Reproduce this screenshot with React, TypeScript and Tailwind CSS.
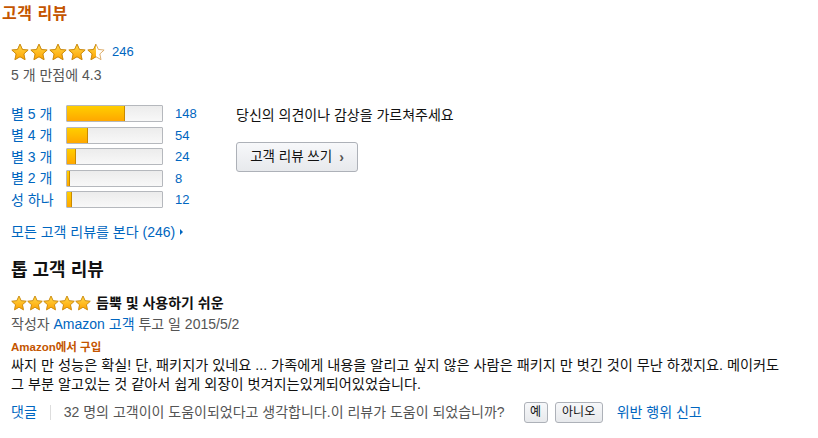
import React from "react";

const font = { fontFamily: '"Liberation Sans", Arial, "Noto Sans CJK KR", sans-serif' };

function Star({ size, fill = 1, id }: { size: number; fill?: number; id: string }) {
  // fill: 1 full, 0.5 half
  return (
    <svg width={size} height={size} viewBox="0 0 24 24">
      <defs>
        <linearGradient id={`g-${id}`} x1="0" y1="0" x2="0" y2="1">
          <stop offset="0" stopColor="#ffd94a" />
          <stop offset="1" stopColor="#ffa200" />
        </linearGradient>
        <clipPath id={`c-${id}`}>
          <rect x="0" y="0" width={24 * fill} height="24" />
        </clipPath>
      </defs>
      <path
        d="M12 1.6l3.2 7 7.6.8-5.7 5.2 1.6 7.6L12 18.3l-6.7 3.9 1.6-7.6L1.2 9.4l7.6-.8z"
        fill="#fff"
        stroke="#d9a45a"
        strokeWidth="1.2"
        strokeLinejoin="round"
      />
      <path
        d="M12 1.6l3.2 7 7.6.8-5.7 5.2 1.6 7.6L12 18.3l-6.7 3.9 1.6-7.6L1.2 9.4l7.6-.8z"
        fill={`url(#g-${id})`}
        stroke="#c98a0b"
        strokeWidth="1.2"
        strokeLinejoin="round"
        clipPath={`url(#c-${id})`}
      />
    </svg>
  );
}

const rows = [
  { label: "별 5 개", count: 148 },
  { label: "별 4 개", count: 54 },
  { label: "별 3 개", count: 24 },
  { label: "별 2 개", count: 8 },
  { label: "성 하나", count: 12 },
];

export default function App() {
  return (
    <div className="bg-white w-[818px] h-[438px] overflow-hidden text-[#111] pl-[2px] pt-[4px]" style={font}>
      <h2 className="text-[16px] leading-[20px] font-bold text-[#c45500] tracking-[0.5px]">고객 리뷰</h2>

      <div className="pl-[9px]">
        {/* rating summary */}
        <div className="flex items-center mt-[19px] h-[18px]">
          <div className="flex gap-[1px]">
            <Star size={18} id="a1" />
            <Star size={18} id="a2" />
            <Star size={18} id="a3" />
            <Star size={18} id="a4" />
            <Star size={18} fill={0.5} id="a5" />
          </div>
          <a className="ml-[7px] text-[13px] text-[#0066c0]">246</a>
        </div>
        <div className="mt-[6px] text-[14px] leading-[16px] text-[#555]">5 개 만점에 4.3</div>

        {/* histogram + write review */}
        <div className="flex mt-[20px]">
          <div className="w-[225px]">
            {rows.map((r) => (
              <div key={r.label} className="flex items-center h-[21.5px]">
                <span className="w-[55px] text-[14px] leading-[18px] text-[#0066c0]">{r.label}</span>
                <div className="w-[97px] h-[17px] border border-[#b5b8bd] rounded-[1px] bg-gradient-to-b from-[#ececec] to-[#f8f8f8] overflow-hidden">
                  <div
                    className="h-full bg-gradient-to-b from-[#ffce00] to-[#ffa700] border-r border-[#c88a00]"
                    style={{ width: `${Math.max(3, (r.count / 246) * 96)}px` }}
                  />
                </div>
                <span className="ml-[12px] text-[13px] text-[#0066c0]">{r.count}</span>
              </div>
            ))}
          </div>
          <div className="pt-[3px]">
            <div className="text-[14px] leading-[18px] text-[#111]">당신의 의견이나 감상을 가르쳐주세요</div>
            <button className="mt-[18px] w-[122px] h-[30px] border border-[#adb1b8] rounded-[3px] bg-gradient-to-b from-[#f7f8fa] to-[#e7e9ec] text-[13.5px] text-[#111] flex items-center justify-center gap-[7px]">
              <span>고객 리뷰 쓰기</span>
              <span className="text-[14px] font-bold text-[#555] leading-none">›</span>
            </button>
          </div>
        </div>

        <div className="mt-[13.5px] flex items-center text-[14px] leading-[16px] text-[#0066c0]">
          모든 고객 리뷰를 본다 <span className="ml-[4px]">(246)</span>
          <span className="ml-[5px] inline-block w-0 h-0 border-y-[3.5px] border-y-transparent border-l-[3.5px] border-l-[#0066c0]" />
        </div>

        {/* top review */}
        <h3 className="mt-[19px] text-[18px] leading-[22px] font-bold text-[#111]">톱 고객 리뷰</h3>

        <div className="mt-[14px] flex items-center h-[16px]">
          <div className="flex">
            <Star size={16} id="b1" />
            <Star size={16} id="b2" />
            <Star size={16} id="b3" />
            <Star size={16} id="b4" />
            <Star size={16} id="b5" />
          </div>
          <span className="ml-[5px] text-[14px] font-bold text-[#111]">듬뿍 및 사용하기 쉬운</span>
        </div>

        <div className="mt-[4px] text-[14px] leading-[18px] text-[#555]">
          작성자 <span className="text-[#0066c0]">Amazon 고객</span> 투고 일 2015/5/2
        </div>

        <div className="mt-[7px] text-[11.5px] leading-[14px] font-bold text-[#c45500]">Amazon에서 구입</div>
        <p className="mt-[1.5px] text-[14.2px] leading-[19px] text-[#111]">
          싸지 만 성능은 확실! 단, 패키지가 있네요 ... 가족에게 내용을 알리고 싶지 않은 사람은 패키지 만 벗긴 것이 무난 하겠지요. 메이커도
          <br />
          그 부분 알고있는 것 같아서 쉽게 외장이 벗겨지는있게되어있었습니다.
        </p>

        <div className="mt-[8px] flex items-center text-[14px] h-[21px]">
          <span className="text-[#0066c0]">댓글</span>
          <span className="mx-[13px] w-px h-[15px] bg-[#ddd]" />
          <span className="text-[#555]">32 명의 고객이이 도움이되었다고 생각합니다.이 리뷰가 도움이 되었습니까?</span>
          <button className="ml-[19px] w-[24px] h-[21px] border border-[#adb1b8] rounded-[3px] bg-gradient-to-b from-[#f7f8fa] to-[#e7e9ec] text-[12px] text-[#111]">
            예
          </button>
          <button className="ml-[7px] w-[48px] h-[21px] border border-[#adb1b8] rounded-[3px] bg-gradient-to-b from-[#f7f8fa] to-[#e7e9ec] text-[12px] text-[#111]">
            아니오
          </button>
          <span className="ml-[14px] text-[#0066c0]">위반 행위 신고</span>
        </div>
      </div>
    </div>
  );
}
